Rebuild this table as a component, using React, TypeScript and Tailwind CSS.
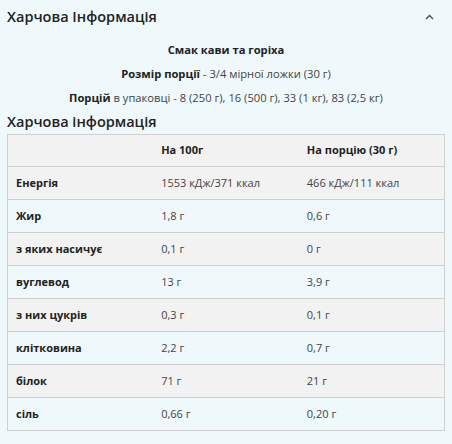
const rows = [
  { name: "Енергія", per100: "1553 кДж/371 ккал", perServing: "466 кДж/111 ккал" },
  { name: "Жир", per100: "1,8 г", perServing: "0,6 г" },
  { name: "з яких насичує", per100: "0,1 г", perServing: "0 г" },
  { name: "вуглевод", per100: "13 г", perServing: "3,9 г" },
  { name: "з них цукрів", per100: "0,3 г", perServing: "0,1 г" },
  { name: "клітковина", per100: "2,2 г", perServing: "0,7 г" },
  { name: "білок", per100: "71 г", perServing: "21 г" },
  { name: "сіль", per100: "0,66 г", perServing: "0,20 г" },
];

export default function App() {
  return (
    <div className="w-[452px] h-[444px] bg-[#eff8fa] text-[#333] font-['Open_Sans',sans-serif] overflow-hidden">
      <div className="flex items-center justify-between pl-[7px] pr-[18px] h-[34px]">
        <h2 className="text-[14.5px] font-semibold text-[#222]">Харчова Інформація</h2>
        <svg width="9" height="6" viewBox="0 0 9 6" className="text-[#555]">
          <polyline points="1,5 4.5,1.5 8,5" fill="none" stroke="currentColor" strokeWidth="1.5" />
        </svg>
      </div>

      <div className="flex flex-col items-center gap-[8px] mt-[8px] text-[11.2px] leading-[16px]">
        <p className="font-bold text-[#222]">Смак кави та горіха</p>
        <p className="text-[#444]">
          <span className="font-bold text-[#222]">Розмір порції</span> - 3/4 мірної ложки (30 г)
        </p>
        <p className="text-[#444]">
          <span className="font-bold text-[#222]">Порцій</span> в упаковці - 8 (250 г), 16 (500 г), 33 (1 кг), 83 (2,5 кг)
        </p>
      </div>

      <h3 className="px-[7px] mt-[6px] text-[14.5px] font-semibold text-[#222] leading-[20px]">Харчова інформація</h3>

      <div className="px-[7px] mt-[2px]">
        <table className="w-full table-fixed border-collapse border border-[#cfcfcf] text-[11px]">
          <thead>
            <tr className="bg-[#f2f2f2] h-[32px]">
              <th className="text-left px-[8px]"></th>
              <th className="text-left px-[8px] font-bold text-[#222]">На 100г</th>
              <th className="text-left px-[8px] font-bold text-[#222]">На порцію (30 г)</th>
            </tr>
          </thead>
          <tbody>
            {rows.map((r, i) => (
              <tr key={r.name} className={`h-[33px] border-t border-[#cfcfcf] ${i % 2 === 0 ? "bg-[#f2f2f2]" : "bg-[#eff8fa]"}`}>
                <td className="px-[8px] font-bold text-[#222]">{r.name}</td>
                <td className="px-[8px] text-[#444]">{r.per100}</td>
                <td className="px-[8px] text-[#444]">{r.perServing}</td>
              </tr>
            ))}
          </tbody>
        </table>
      </div>
    </div>
  );
}
